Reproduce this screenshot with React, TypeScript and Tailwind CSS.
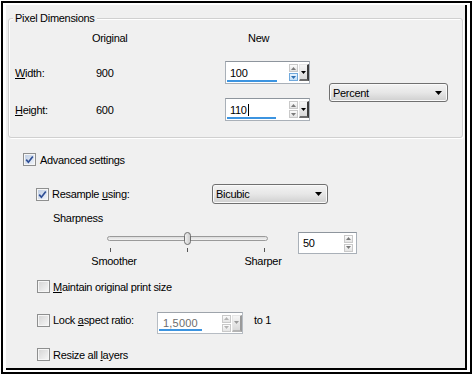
import React from 'react';

const CheckBox: React.FC<{ checked?: boolean }> = ({ checked }) => (
  <div className="w-[13px] h-[13px] shrink-0 border border-[#8e8f8f] bg-white">
    <div
      className={`relative w-full h-full shadow-[inset_0_0_0_1px_#f6f6f6] ${
        checked
          ? 'bg-linear-to-br from-[#bccbe2] to-[#f4f7fb]'
          : 'bg-linear-to-br from-[#d3d3d3] to-[#f8f8f8]'
      }`}
    >
      {checked && (
        <svg className="absolute inset-0" width="11" height="11" viewBox="0 0 11 11">
          <path d="M2.2 5.6 L4.4 8.2 L8.8 2.4" fill="none" stroke="#2f4f96" strokeWidth="1.7" />
        </svg>
      )}
    </div>
  </div>
);

const Spin: React.FC<{ active?: boolean; disabled?: boolean }> = ({ active, disabled }) => {
  const tri = disabled ? '#b4b4b4' : '#7a7a7a';
  return (
    <div className="flex flex-col gap-px w-[9px] shrink-0">
      <div className="h-[8px] border border-[#c9c9c9] bg-linear-to-b from-[#fcfcfc] to-[#e4e4e4] flex items-center justify-center">
        <svg width="5" height="3" viewBox="0 0 5 3">
          <path d="M2.5 0 L5 3 L0 3 Z" fill={tri} />
        </svg>
      </div>
      <div
        className={`h-[8px] border flex items-center justify-center ${
          active
            ? 'border-[#6fa8dc] bg-linear-to-b from-[#eaf4fd] to-[#c4e0f8]'
            : 'border-[#c9c9c9] bg-linear-to-b from-[#fcfcfc] to-[#e4e4e4]'
        }`}
      >
        <svg width="5" height="3" viewBox="0 0 5 3">
          <path d="M0 0 H5 L2.5 3 Z" fill={active ? '#2f6fb0' : tri} />
        </svg>
      </div>
    </div>
  );
};

const DropBtn: React.FC<{ disabled?: boolean }> = ({ disabled }) => (
  <div
    className={`w-[10px] h-[17px] shrink-0 border border-[#e6e6e6] border-r-2 border-b-2 flex items-center justify-center bg-linear-to-b from-[#f6f6f6] to-[#d9d9d9] ${
      disabled ? 'border-r-[#9a9a9a] border-b-[#b4b4b4]' : 'border-r-[#3c3c3c] border-b-[#6c6c6c]'
    }`}
  >
    <svg width="5" height="3" viewBox="0 0 5 3">
      <path d="M0 0 H5 L2.5 3 Z" fill={disabled ? '#9a9a9a' : '#000'} />
    </svg>
  </div>
);

const Combo: React.FC<{ label: string; size: string }> = ({ label, size }) => (
  <div
    className={`${size} flex items-center justify-between rounded-[3px] border border-[#707070] bg-linear-to-b from-[#f3f3f3] via-[#e7e7e7] to-[#cfcfcf] pl-[3px] pr-[5px] shadow-[inset_0_0_0_1px_#fafafa]`}
  >
    <span>{label}</span>
    <svg width="7" height="4" viewBox="0 0 7 4">
      <path d="M0 0 H7 L3.5 4 Z" fill="#000" />
    </svg>
  </div>
);

const App: React.FC = () => {
  return (
    <div className="w-[472px] h-[375px] bg-white pt-px pl-px font-['Liberation_Sans',Arial,sans-serif] text-[11px] leading-[14px] tracking-[-0.3px] text-black">
      <div className="w-[471px] h-[373px] border-2 border-black pt-[2px] pl-[3px]">
        <div className="w-[461px] h-[365px] bg-[#f0f0f0] border-r-2 border-b-2 border-black px-[2px] pt-[13px]">
          {/* Pixel Dimensions group */}
          <div className="relative h-[120px] rounded-[3px] border border-[#d0d0d0] shadow-[1px_1px_0_#ffffff,inset_1px_1px_0_#ffffff] pt-[12px] pl-[6px]">
            <span className="absolute left-[4px] -top-[7px] px-[2px] bg-[#f0f0f0] leading-[13px]">Pixel Dimensions</span>
            <div className="flex">
              <div className="w-[77px] flex flex-col">
                <div className="h-[14px]" />
                <div className="mt-[16px] h-[23px] flex items-center">
                  <span><u>W</u>idth:</span>
                </div>
                <div className="mt-[14px] h-[23px] flex items-center">
                  <span><u>H</u>eight:</span>
                </div>
              </div>
              <div className="w-[133px] flex flex-col">
                <div className="h-[14px]">Original</div>
                <div className="mt-[16px] h-[23px] flex items-center pl-[4px]">900</div>
                <div className="mt-[14px] h-[23px] flex items-center pl-[4px]">600</div>
              </div>
              <div className="w-[104px] flex flex-col">
                <div className="h-[14px] pl-[23px]">New</div>
                <div className="mt-[16px] w-[85px] h-[23px] border border-[#a9b0b8] border-t-[#8e959d] bg-white flex items-center pr-0">
                  <div className="relative flex-1 h-full flex items-center pl-[4px]">
                    <span>100</span>
                    <div className="absolute left-px bottom-px w-[50px] h-[2px] bg-[#3c94e0]" />
                  </div>
                  <Spin active />
                  <div className="w-px" />
                  <DropBtn />
                </div>
                <div className="mt-[14px] w-[85px] h-[23px] border border-[#a9b0b8] border-t-[#8e959d] bg-white flex items-center">
                  <div className="relative flex-1 h-full flex items-center pl-[4px]">
                    <span>110</span>
                    <span className="w-px h-[12px] bg-black ml-px" />
                    <div className="absolute left-px bottom-px w-[49px] h-[2px] bg-[#3c94e0]" />
                  </div>
                  <Spin />
                  <div className="w-px" />
                  <DropBtn />
                </div>
              </div>
              <div className="pt-[52px]">
                <Combo label="Percent" size="w-[119px] h-[19px]" />
              </div>
            </div>
          </div>

          {/* Advanced settings */}
          <div className="pl-[15px] flex flex-col">
            <div className="mt-[15px] h-[13px] flex items-center">
              <CheckBox checked />
              <span className="ml-[4px]">Advanced settings</span>
            </div>

            <div className="mt-[18px] h-[20px] flex items-center">
              <div className="ml-[13px]">
                <CheckBox checked />
              </div>
              <span className="ml-[3px] w-[160px]">Resample <u>u</u>sing:</span>
              <Combo label="Bicubic" size="w-[116px] h-[20px]" />
            </div>

            <div className="mt-[7px] h-[14px] pl-[30px]">Sharpness</div>

            <div className="mt-[7px] h-[22px] flex items-start">
              <svg className="ml-[81px] shrink-0" width="166" height="22" viewBox="0 0 166 22">
                <defs>
                  <linearGradient id="trk" x1="0" y1="0" x2="0" y2="1">
                    <stop offset="0" stopColor="#d8d8d8" />
                    <stop offset="1" stopColor="#f7f7f7" />
                  </linearGradient>
                  <linearGradient id="thm" x1="0" y1="0" x2="1" y2="0">
                    <stop offset="0" stopColor="#f4f4f4" />
                    <stop offset="1" stopColor="#c9c9c9" />
                  </linearGradient>
                </defs>
                <rect x="3.5" y="4.5" width="160" height="4" rx="2" fill="url(#trk)" stroke="#9a9a9a" />
                <rect x="80.5" y="0.5" width="6" height="12" rx="3" fill="url(#thm)" stroke="#6e6e6e" />
                <line x1="6.5" y1="16" x2="6.5" y2="20" stroke="#555" />
                <line x1="83.5" y1="16" x2="83.5" y2="20" stroke="#555" />
                <line x1="160.5" y1="16" x2="160.5" y2="20" stroke="#555" />
              </svg>
              <div className="ml-[28px] w-[59px] h-[22px] border border-[#a9b0b8] border-t-[#8e959d] bg-white flex items-center pl-[4px] pr-[3px]">
                <span className="flex-1">50</span>
                <Spin />
              </div>
            </div>

            <div className="h-[14px] flex">
              <span className="ml-[61px] w-[60px] text-center">Smoother</span>
              <span className="ml-[89px] w-[60px] text-center">Sharper</span>
            </div>

            <div className="mt-[12px] h-[13px] flex items-center">
              <div className="ml-[14px]">
                <CheckBox />
              </div>
              <span className="ml-[3px]"><u>M</u>aintain original print size</span>
            </div>

            <div className="mt-[19px] h-[22px] flex items-start">
              <div className="ml-[14px] mt-[2px]">
                <CheckBox />
              </div>
              <span className="ml-[3px] mt-px w-[104px]">Lock <u>a</u>spect ratio:</span>
              <div className="w-[86px] h-[22px] border border-[#b6bcc3] border-t-[#9ea4ab] bg-white flex items-center">
                <div className="relative flex-1 h-full flex items-center pl-[5px] text-[#6d6d6d] tracking-[0.2px]">
                  <span>1,5000</span>
                  <div className="absolute left-px bottom-[2px] w-[43px] h-[2px] bg-[#3c94e0]" />
                </div>
                <Spin disabled />
                <div className="w-px" />
                <DropBtn disabled />
              </div>
              <span className="ml-[11px] mt-px">to 1</span>
            </div>

            <div className="mt-[14px] h-[13px] flex items-center">
              <div className="ml-[14px]">
                <CheckBox />
              </div>
              <span className="ml-[3px]">Resize all <u>l</u>ayers</span>
            </div>
          </div>
        </div>
      </div>
    </div>
  );
};

export default App;
